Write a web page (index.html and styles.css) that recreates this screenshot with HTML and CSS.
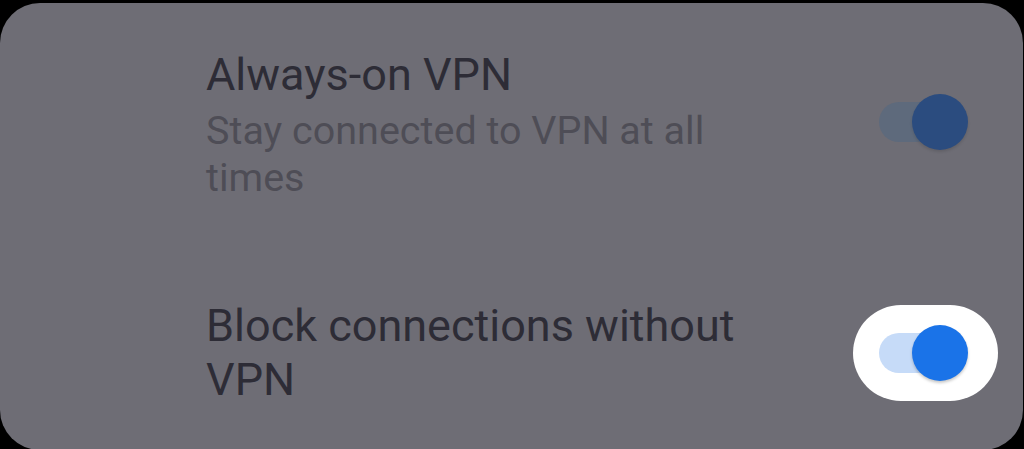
FILE: index.html
```html
<!DOCTYPE html>
<html>
<head>
<meta charset="utf-8">
<link rel="stylesheet" href="styles.css">
</head>
<body>
<div class="card">
  <div class="row row-first">
    <div class="text">
      <div class="title">Always-on VPN</div>
      <div class="summary">Stay connected to VPN at all times</div>
    </div>
    <div class="switch switch-dim">
      <div class="track"><div class="thumb"></div></div>
    </div>
  </div>
  <div class="row row-second">
    <div class="text">
      <div class="title">Block connections without VPN</div>
    </div>
    <div class="switch switch-focus">
      <div class="track"><div class="thumb"></div></div>
    </div>
  </div>
</div>
</body>
</html>
```

FILE: styles.css
```css
html, body {
  margin: 0;
  padding: 0;
  background: #000;
  overflow: hidden;
}
.card {
  margin-top: 3px;
  width: 1023px;
  height: 447px;
  box-sizing: border-box;
  background: #6e6d75;
  border-radius: 40px;
  padding: 45px 25px 0 206px;
  display: flex;
  flex-direction: column;
  font-family: Roboto, "Noto Sans", sans-serif;
}
.row {
  display: flex;
  align-items: center;
}
.row-second {
  margin-top: 98px;
}
.text {
  width: 560px;
}
.title {
  font-size: 45px;
  line-height: 54px;
  color: #2d2c36;
}
.summary {
  margin-top: 5px;
  font-size: 39.5px;
  line-height: 47px;
  color: #4e4d56;
}
.switch {
  margin-left: auto;
  width: 145px;
  height: 96px;
  border-radius: 48px;
  box-sizing: border-box;
  padding-left: 26px;
  display: flex;
  align-items: center;
}
.row-first .switch {
  margin-top: -5px;
}
.track {
  position: relative;
  width: 84px;
  height: 40px;
  border-radius: 20px;
}
.thumb {
  position: absolute;
  right: -5px;
  top: -8px;
  width: 56px;
  height: 56px;
  border-radius: 50%;
}
.switch-dim .track {
  background: #5e6a7c;
}
.switch-dim .thumb {
  background: #2b4c7f;
  box-shadow: 0 2px 3px rgba(0, 0, 0, 0.12);
}
.switch-focus {
  background: #ffffff;
}
.switch-focus .track {
  background: #c6dbf8;
}
.switch-focus .thumb {
  background: #1a73e8;
  box-shadow: 0 2px 3px rgba(0, 0, 0, 0.22);
}
```
